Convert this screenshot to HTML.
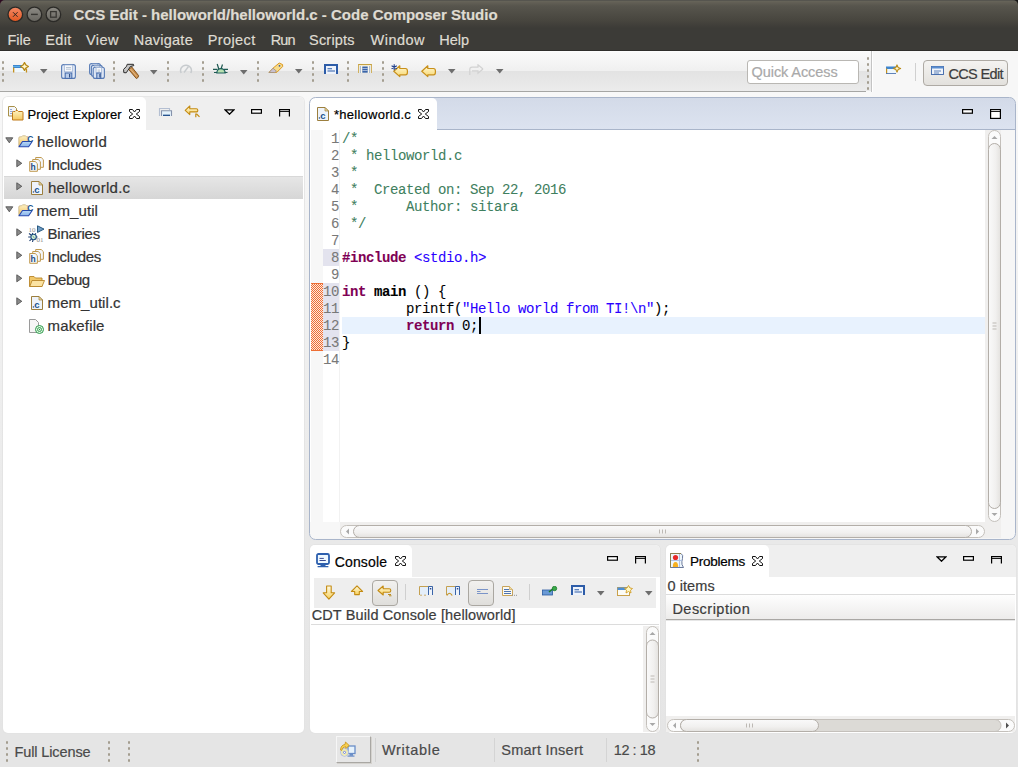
<!DOCTYPE html>
<html><head><meta charset="utf-8"><style>
html,body{margin:0;padding:0;}
body{width:1018px;height:767px;position:relative;overflow:hidden;background:linear-gradient(#f8f8f8 0px,#f8f8f8 92px,#e9e9e9 540px,#e5e5e5 733px,#e5e5e5 767px);font-family:"Liberation Sans",sans-serif;}
body>div{position:absolute;box-sizing:border-box;}
.t{line-height:20px;white-space:pre;-webkit-text-stroke:0.2px currentColor;}
</style></head><body>
<div style="left:0px;top:0px;width:1018px;height:51px;background:linear-gradient(#56554f 0px,#56554f 1px,#67655a 1px,#625f55 2.5px,#57554d 6px,#48463f 20px,#3c3b37 28px,#3c3b37 49.5px,#302f2c 50px,#2f2e2b 51px);border-radius:5px 5px 0 0;"></div>
<div style="left:0px;top:0px;width:6px;height:6px;background:#2c0b20;z-index:-1"></div>
<div style="left:1012px;top:0px;width:6px;height:6px;background:#151515;z-index:-1"></div>
<svg style="position:absolute;left:6px;top:5px" width="58" height="19" viewBox="0 0 58 19">
<defs>
<linearGradient id="gclose" x1="0" y1="0" x2="0" y2="1"><stop offset="0" stop-color="#f58a66"/><stop offset="1" stop-color="#e2561f"/></linearGradient>
<linearGradient id="ggray" x1="0" y1="0" x2="0" y2="1"><stop offset="0" stop-color="#8d8b85"/><stop offset="1" stop-color="#67655f"/></linearGradient>
</defs>
<circle cx="9.3" cy="9.4" r="7.3" fill="url(#gclose)" stroke="#2b2a27" stroke-width="1.3"/>
<path d="M7 7.2 L11.6 11.8 M11.6 7.2 L7 11.8" stroke="#2e2620" stroke-width="1"/>
<circle cx="28.4" cy="9.4" r="7.3" fill="url(#ggray)" stroke="#2b2a27" stroke-width="1.3"/>
<path d="M25 9.4 H31.8" stroke="#383733" stroke-width="1.4"/>
<circle cx="47.4" cy="9.4" r="7.3" fill="url(#ggray)" stroke="#2b2a27" stroke-width="1.3"/>
<rect x="44.6" y="6.6" width="5.6" height="5.6" fill="none" stroke="#383733" stroke-width="1.3"/>
</svg>
<div class="t" style="left:73.6px;top:5px;font-family:'Liberation Sans';font-size:15px;font-weight:bold;color:#dfdbd2;letter-spacing:-0.003px;">CCS Edit - helloworld/helloworld.c - Code Composer Studio</div>
<div class="t" style="left:7.5px;top:30px;font-family:'Liberation Sans';font-size:14.5px;font-weight:normal;color:#dfdbd2;letter-spacing:-0.044px;">File</div>
<div class="t" style="left:45.3px;top:30px;font-family:'Liberation Sans';font-size:14.5px;font-weight:normal;color:#dfdbd2;letter-spacing:0.300px;">Edit</div>
<div class="t" style="left:86px;top:30px;font-family:'Liberation Sans';font-size:14.5px;font-weight:normal;color:#dfdbd2;letter-spacing:0.457px;">View</div>
<div class="t" style="left:133.7px;top:30px;font-family:'Liberation Sans';font-size:14.5px;font-weight:normal;color:#dfdbd2;letter-spacing:0.258px;">Navigate</div>
<div class="t" style="left:207.7px;top:30px;font-family:'Liberation Sans';font-size:14.5px;font-weight:normal;color:#dfdbd2;letter-spacing:0.408px;">Project</div>
<div class="t" style="left:270.7px;top:30px;font-family:'Liberation Sans';font-size:14.5px;font-weight:normal;color:#dfdbd2;letter-spacing:-0.803px;">Run</div>
<div class="t" style="left:309px;top:30px;font-family:'Liberation Sans';font-size:14.5px;font-weight:normal;color:#dfdbd2;letter-spacing:0.210px;">Scripts</div>
<div class="t" style="left:370.5px;top:30px;font-family:'Liberation Sans';font-size:14.5px;font-weight:normal;color:#dfdbd2;letter-spacing:0.487px;">Window</div>
<div class="t" style="left:439.3px;top:30px;font-family:'Liberation Sans';font-size:14.5px;font-weight:normal;color:#dfdbd2;letter-spacing:-0.032px;">Help</div>
<div style="left:0px;top:51px;width:872px;height:40px;background:linear-gradient(#ffffff 0px,#fafafa 1px,#f0f0f0 19.5px,#e3e3e3 20.5px,#ebebeb 39px,#ececec 40px);"></div>
<div style="left:0px;top:91px;width:866px;height:1px;background:#a6a6a4;"></div>
<div style="left:872px;top:51px;width:146px;height:46px;background:#f7f7f7;"></div>
<div style="left:871px;top:51px;width:1px;height:41px;background:#c4c4c4;"></div>
<div style="left:872px;top:51px;width:1px;height:41px;background:#fff;"></div>
<div style="left:1.5px;top:61px;width:2px;height:3px;background:#a39d8f;border-radius:1px;"></div>
<div style="left:1.5px;top:67px;width:2px;height:3px;background:#a39d8f;border-radius:1px;"></div>
<div style="left:1.5px;top:73px;width:2px;height:3px;background:#a39d8f;border-radius:1px;"></div>
<div style="left:1.5px;top:79px;width:2px;height:3px;background:#a39d8f;border-radius:1px;"></div>
<div style="left:112.5px;top:61px;width:2px;height:3px;background:#a39d8f;border-radius:1px;"></div>
<div style="left:112.5px;top:67px;width:2px;height:3px;background:#a39d8f;border-radius:1px;"></div>
<div style="left:112.5px;top:73px;width:2px;height:3px;background:#a39d8f;border-radius:1px;"></div>
<div style="left:112.5px;top:79px;width:2px;height:3px;background:#a39d8f;border-radius:1px;"></div>
<div style="left:166.5px;top:61px;width:2px;height:3px;background:#a39d8f;border-radius:1px;"></div>
<div style="left:166.5px;top:67px;width:2px;height:3px;background:#a39d8f;border-radius:1px;"></div>
<div style="left:166.5px;top:73px;width:2px;height:3px;background:#a39d8f;border-radius:1px;"></div>
<div style="left:166.5px;top:79px;width:2px;height:3px;background:#a39d8f;border-radius:1px;"></div>
<div style="left:201.5px;top:61px;width:2px;height:3px;background:#a39d8f;border-radius:1px;"></div>
<div style="left:201.5px;top:67px;width:2px;height:3px;background:#a39d8f;border-radius:1px;"></div>
<div style="left:201.5px;top:73px;width:2px;height:3px;background:#a39d8f;border-radius:1px;"></div>
<div style="left:201.5px;top:79px;width:2px;height:3px;background:#a39d8f;border-radius:1px;"></div>
<div style="left:256.5px;top:61px;width:2px;height:3px;background:#a39d8f;border-radius:1px;"></div>
<div style="left:256.5px;top:67px;width:2px;height:3px;background:#a39d8f;border-radius:1px;"></div>
<div style="left:256.5px;top:73px;width:2px;height:3px;background:#a39d8f;border-radius:1px;"></div>
<div style="left:256.5px;top:79px;width:2px;height:3px;background:#a39d8f;border-radius:1px;"></div>
<div style="left:311.5px;top:61px;width:2px;height:3px;background:#a39d8f;border-radius:1px;"></div>
<div style="left:311.5px;top:67px;width:2px;height:3px;background:#a39d8f;border-radius:1px;"></div>
<div style="left:311.5px;top:73px;width:2px;height:3px;background:#a39d8f;border-radius:1px;"></div>
<div style="left:311.5px;top:79px;width:2px;height:3px;background:#a39d8f;border-radius:1px;"></div>
<div style="left:346.5px;top:61px;width:2px;height:3px;background:#a39d8f;border-radius:1px;"></div>
<div style="left:346.5px;top:67px;width:2px;height:3px;background:#a39d8f;border-radius:1px;"></div>
<div style="left:346.5px;top:73px;width:2px;height:3px;background:#a39d8f;border-radius:1px;"></div>
<div style="left:346.5px;top:79px;width:2px;height:3px;background:#a39d8f;border-radius:1px;"></div>
<div style="left:381.5px;top:61px;width:2px;height:3px;background:#a39d8f;border-radius:1px;"></div>
<div style="left:381.5px;top:67px;width:2px;height:3px;background:#a39d8f;border-radius:1px;"></div>
<div style="left:381.5px;top:73px;width:2px;height:3px;background:#a39d8f;border-radius:1px;"></div>
<div style="left:381.5px;top:79px;width:2px;height:3px;background:#a39d8f;border-radius:1px;"></div>
<div style="left:866.5px;top:57px;width:2px;height:3px;background:#a39d8f;border-radius:1px;"></div>
<div style="left:866.5px;top:63px;width:2px;height:3px;background:#a39d8f;border-radius:1px;"></div>
<div style="left:866.5px;top:69px;width:2px;height:3px;background:#a39d8f;border-radius:1px;"></div>
<div style="left:866.5px;top:75px;width:2px;height:3px;background:#a39d8f;border-radius:1px;"></div>
<div style="left:866.5px;top:81px;width:2px;height:3px;background:#a39d8f;border-radius:1px;"></div>
<div style="left:866.5px;top:87px;width:2px;height:3px;background:#a39d8f;border-radius:1px;"></div>
<svg style="position:absolute;left:12px;top:62px" width="17" height="12" viewBox="0 0 17 12"><defs><linearGradient id="nwb" x1="0" y1="0" x2="0" y2="1"><stop offset="0" stop-color="#2f6fc0"/><stop offset="0.5" stop-color="#5ab0ea"/><stop offset="1" stop-color="#2f6fc0"/></linearGradient></defs><rect x="1" y="3" width="14" height="7" fill="#eef7fd"/><rect x="1" y="3" width="12" height="3" fill="url(#nwb)"/><rect x="1" y="5.5" width="1.3" height="5" fill="#c4901e"/><rect x="13.8" y="6.5" width="1.3" height="4" fill="#c4901e"/><path d="M12.5 0.6000000000000001 L13.95 3.05 L16.4 4.5 L13.95 5.95 L12.5 8.4 L11.05 5.95 L8.6 4.5 L11.05 3.05 Z" fill="#fff6d0" stroke="#b88a16" stroke-width="1.3" stroke-linejoin="round"/></svg>
<svg style="position:absolute;left:40px;top:69px" width="8" height="5" viewBox="0 0 8 5"><path d="M0 0H7.5L3.75 4.6Z" fill="#6d6d6d"/></svg>
<svg style="position:absolute;left:61px;top:64px" width="15" height="15" viewBox="0 0 15 15"><rect x="0.6" y="0.6" width="13.8" height="13.8" rx="2" fill="#dde6f4" stroke="#5a7db6" stroke-width="1.1"/><rect x="3.5" y="1" width="8" height="6.75" fill="#f6f8fb" stroke="#9fb3d3" stroke-width="0.7"/><path d="M5 3.5 H10 M5 5.2 H10" stroke="#a8b8cc" stroke-width="0.8"/><rect x="4.2" y="9" width="6.6" height="5.4" fill="#b9cdea" stroke="#4a6fae" stroke-width="1.1"/><rect x="8.0" y="10" width="1.2" height="3.5" fill="#35528a"/></svg>
<svg style="position:absolute;left:89px;top:63px" width="17" height="17" viewBox="0 0 17 17"><rect x="0.6" y="0.6" width="10.8" height="10.8" rx="2" fill="#dde6f4" stroke="#5a7db6" stroke-width="1.1"/><rect x="3.5" y="1" width="5" height="5.4" fill="#f6f8fb" stroke="#9fb3d3" stroke-width="0.7"/><rect x="4.2" y="6" width="3.5999999999999996" height="5.4" fill="#b9cdea" stroke="#4a6fae" stroke-width="1.1"/><rect x="6.5" y="7" width="1.2" height="3.5" fill="#35528a"/><rect x="2.4" y="2.4" width="10.8" height="10.8" rx="2" fill="#dde6f4" stroke="#5a7db6" stroke-width="1.1"/><rect x="5.3" y="2.8" width="5" height="5.4" fill="#f6f8fb" stroke="#9fb3d3" stroke-width="0.7"/><rect x="6.0" y="7.800000000000001" width="3.5999999999999996" height="5.4" fill="#b9cdea" stroke="#4a6fae" stroke-width="1.1"/><rect x="8.3" y="8.8" width="1.2" height="3.5" fill="#35528a"/><rect x="4.2" y="4.2" width="11.200000000000001" height="11.200000000000001" rx="2" fill="#dde6f4" stroke="#5a7db6" stroke-width="1.1"/><rect x="7.1" y="4.6" width="5.4" height="5.58" fill="#f6f8fb" stroke="#9fb3d3" stroke-width="0.7"/><path d="M8.6 7.1 H11.0 M8.6 8.8 H11.0" stroke="#a8b8cc" stroke-width="0.8"/><rect x="7.800000000000001" y="10.0" width="4.0" height="5.4" fill="#b9cdea" stroke="#4a6fae" stroke-width="1.1"/><rect x="10.3" y="11.0" width="1.2" height="3.5" fill="#35528a"/></svg>
<svg style="position:absolute;left:118px;top:60px" width="24" height="22" viewBox="0 0 24 22"><defs><linearGradient id="hh" x1="0" y1="0" x2="1" y2="0"><stop offset="0" stop-color="#9a6428"/><stop offset="0.5" stop-color="#e0aa6a"/><stop offset="1" stop-color="#a86a2a"/></linearGradient></defs><path d="M10.6 9.4 L13.8 7 L20.6 15.6 Q20.8 17.6 18.4 18.6 Z" fill="#c9904e" stroke="#7a4814" stroke-width="0.9" stroke-linejoin="round"/><path d="M12.5 9 L18.8 16.5" stroke="#e8c090" stroke-width="0.9"/><path d="M5.8 12.6 L5.6 9.4 L8.6 6.2 L9.2 4.3 H15.4 L15.8 5.6 L12.3 6.6 L10.8 9 L8.2 12.8 Z" fill="#c6c6c6" stroke="#2a2a2a" stroke-width="1" stroke-linejoin="round"/></svg>
<svg style="position:absolute;left:150px;top:70px" width="8" height="5" viewBox="0 0 8 5"><path d="M0 0H7.5L3.75 4.6Z" fill="#6d6d6d"/></svg>
<svg style="position:absolute;left:179px;top:63px" width="14" height="11" viewBox="0 0 14 11"><path d="M2.2 10 A5.4 5.4 0 1 1 11.8 10" fill="none" stroke="#c7cbce" stroke-width="1.5"/><path d="M5 9.5 L9.5 3.5" stroke="#c7cbce" stroke-width="1.4"/></svg>
<svg style="position:absolute;left:212px;top:63px" width="17" height="11" viewBox="0 0 17 11"><path d="M4.8 10 A4.2 4.4 0 0 1 13.2 10 Z" fill="#b8e0b0" stroke="#1f6060" stroke-width="1.2"/><path d="M1 6.3 H5.5 M2 9.5 H5 M12 6.3 H16 M12.5 9.5 H15.5 M5.2 1 L6.8 6 M10.5 1.5 L9 6" stroke="#1f5a52" stroke-width="1.2"/></svg>
<svg style="position:absolute;left:240px;top:70px" width="8" height="5" viewBox="0 0 8 5"><path d="M0 0H7.5L3.75 4.6Z" fill="#6d6d6d"/></svg>
<svg style="position:absolute;left:268px;top:62px" width="17" height="12" viewBox="0 0 17 12"><path d="M1 10.5 L5 6.2 L11.2 1 L14.6 2.6 L14.6 4.6 L9 10.2 L6.8 10.5 Z" fill="#f8dc8a" stroke="#dc9820" stroke-width="1" stroke-linejoin="round"/><path d="M1 10.5 L5 6.2 L8.5 9.2 L6.8 10.5 Z" fill="#c8c0d0" stroke="#a09080" stroke-width="0.8"/><circle cx="11.5" cy="3.8" r="0.9" fill="#3a5aa0"/></svg>
<svg style="position:absolute;left:295px;top:69px" width="8" height="5" viewBox="0 0 8 5"><path d="M0 0H7.5L3.75 4.6Z" fill="#6d6d6d"/></svg>
<svg style="position:absolute;left:324px;top:64px" width="14" height="10" viewBox="0 0 14 10"><rect x="1" y="1" width="12" height="9" fill="#eef3fb"/><path d="M1 10 V1 H13 V10" fill="none" stroke="#2d5ca8" stroke-width="2"/><path d="M3.5 4.8 H8 M3.5 7 H11" stroke="#2d5ca8" stroke-width="1.1"/></svg>
<svg style="position:absolute;left:358px;top:64px" width="14" height="9" viewBox="0 0 14 9"><rect x="0.5" y="0.5" width="13" height="9" fill="#fbf8ec" stroke="#d0b060"/><path d="M0.5 0.5 H13.5" stroke="#c4a040" stroke-width="1.3"/><path d="M2.3 2.5 V9 M11.7 2.5 V9" stroke="#3a64a8" stroke-width="1" stroke-dasharray="1 1"/><rect x="4.3" y="2.5" width="5.4" height="6.2" fill="#3a64a8"/><path d="M4.3 4.5 H9.7 M4.3 6.5 H9.7" stroke="#cdd8ec" stroke-width="0.7"/></svg>
<svg style="position:absolute;left:393px;top:64.5px" width="16" height="13" viewBox="0 0 16 13"><defs><linearGradient id="la393" x1="0" y1="0" x2="0" y2="1"><stop offset="0" stop-color="#fff8d8"/><stop offset="1" stop-color="#f8d870"/></linearGradient></defs><path d="M0.8 6.2 L6.8 0.8 V3.5 H12.5 Q14.4 3.5 14.4 5.8 V7.2 Q14.4 9.8 12.5 9.8 H6.8 V11.6 Z" fill="url(#la393)" stroke="#c8901a" stroke-width="1.2" stroke-linejoin="round"/></svg>
<svg style="position:absolute;left:391px;top:64px" width="7" height="7" viewBox="0 0 7 7"><path d="M3.2 0.3 V6.3 M0.6 1.8 L5.8 4.8 M5.8 1.8 L0.6 4.8" stroke="#1f3f8a" stroke-width="1.1"/></svg>
<svg style="position:absolute;left:420.5px;top:64.5px" width="16" height="13" viewBox="0 0 16 13"><defs><linearGradient id="la420.5" x1="0" y1="0" x2="0" y2="1"><stop offset="0" stop-color="#fff8d8"/><stop offset="1" stop-color="#f8d870"/></linearGradient></defs><path d="M0.8 6.2 L6.8 0.8 V3.5 H12.5 Q14.4 3.5 14.4 5.8 V7.2 Q14.4 9.8 12.5 9.8 H6.8 V11.6 Z" fill="url(#la420.5)" stroke="#c8901a" stroke-width="1.2" stroke-linejoin="round"/></svg>
<svg style="position:absolute;left:448px;top:69px" width="8" height="5" viewBox="0 0 8 5"><path d="M0 0H7.5L3.75 4.6Z" fill="#6d6d6d"/></svg>
<svg style="position:absolute;left:469px;top:64px" width="15" height="13" viewBox="0 0 15 13"><path d="M14 5 L9 0.8 V3.2 H3 Q0.8 3.2 0.8 5.5 V11" fill="none" stroke="#d2d2d2" stroke-width="1.2"/><path d="M14 5 L9 9.2 V6.8 H3" fill="none" stroke="#d2d2d2" stroke-width="1.2"/></svg>
<svg style="position:absolute;left:496px;top:69px" width="8" height="5" viewBox="0 0 8 5"><path d="M0 0H7.5L3.75 4.6Z" fill="#6d6d6d"/></svg>
<div style="left:2px;top:96px;width:303px;height:638px;background:#e2e2e2;border-radius:6px;opacity:0.8;"></div>
<div style="left:3px;top:97px;width:301px;height:636px;background:#fff;border-radius:5px;"></div>
<div style="left:3px;top:97px;width:301px;height:33px;background:#efefef;border-radius:5px 5px 0 0;"></div>
<div style="left:3px;top:97px;width:143px;height:33px;background:#fff;border-radius:5px 5px 0 0;"></div>
<svg style="position:absolute;left:7px;top:105px" width="17" height="16" viewBox="0 0 17 16"><defs><linearGradient id="tfy" x1="0" y1="0" x2="0" y2="1"><stop offset="0" stop-color="#fff4c0"/><stop offset="1" stop-color="#f4c860"/></linearGradient></defs><path d="M1.5 1.5 H7.5 L9.5 3.5 V11 H1.5 Z" fill="#f4f6fa" stroke="#a89048" stroke-width="1"/><path d="M3 4.5 H5 M3 6.5 H6 M3 8.5 H5" stroke="#8aa0d0" stroke-width="0.9"/><path d="M5.5 15 V7.5 Q5.5 6.5 6.5 6.5 H8 L9 5.5 H10.5 L11.5 6.5 H15 Q16 6.5 16 7.5 V15 Z" fill="url(#tfy)" stroke="#c07a1a" stroke-width="1"/></svg>
<div class="t" style="left:27.5px;top:105px;font-family:'Liberation Sans';font-size:13px;font-weight:normal;color:#000;letter-spacing:0.113px;">Project Explorer</div>
<svg style="position:absolute;left:129px;top:109px" width="11" height="10" viewBox="0 0 11 10"><path d="M0.5 0.5 H3.5 L5.5 3 L7.5 0.5 H10.5 V2.5 L7.3 5 L10.5 7.5 V9.5 H7.5 L5.5 7 L3.5 9.5 H0.5 V7.5 L3.7 5 L0.5 2.5 Z" fill="#fff" stroke="#111" stroke-width="1"/></svg>
<svg style="position:absolute;left:158px;top:107px" width="15" height="10" viewBox="0 0 15 10"><path d="M1.5 9 V1.5 H11.5 V3" fill="none" stroke="#b4bfd2" stroke-width="1.1"/><rect x="3.5" y="3.8" width="10" height="5.2" fill="#e4f2fb"/><path d="M3.5 9 V3.8 H13.5 V9" fill="none" stroke="#8592ab" stroke-width="1.1"/><path d="M5 8.3 H12" stroke="#1b4a8a" stroke-width="1.3"/></svg>
<svg style="position:absolute;left:184px;top:105px" width="17" height="13" viewBox="0 0 17 13"><defs><linearGradient id="lnk" x1="0" y1="0" x2="0" y2="1"><stop offset="0" stop-color="#fffbe6"/><stop offset="1" stop-color="#f7d15c"/></linearGradient></defs><path d="M1.2 5.3 L5.8 1 V3.7 H12.3 Q13.8 3.7 13.8 5.3 Q13.8 6.9 12.3 6.9 H5.8 V9.6 Z" fill="url(#lnk)" stroke="#c48c14" stroke-width="1.1" stroke-linejoin="round"/><path d="M11.8 12.2 V9 H12.8 L15.5 11.8" fill="none" stroke="#c48c14" stroke-width="1.2"/></svg>
<svg style="position:absolute;left:224px;top:109px" width="11" height="6" viewBox="0 0 11 6"><path d="M1 0.8 H10 L5.5 5.2 Z" fill="none" stroke="#000" stroke-width="1.3" stroke-linejoin="miter"/></svg>
<svg style="position:absolute;left:251px;top:109px" width="11" height="5" viewBox="0 0 11 5"><rect x="0.6" y="0.6" width="9.8" height="3.6" fill="#fff" stroke="#000" stroke-width="1.2"/></svg>
<svg style="position:absolute;left:278.5px;top:109px" width="11" height="8" viewBox="0 0 11 8"><path d="M0.6 7.5 V0.6 H10.4 V7.5" fill="none" stroke="#000" stroke-width="1.2"/><path d="M1 2.5 H10" stroke="#000" stroke-width="0.9"/></svg>
<div style="left:4px;top:176px;width:299px;height:23px;background:linear-gradient(#e6e6e6,#d6d6d6);border-top:1px solid #d8d8d8;"></div>
<svg style="position:absolute;left:4.5px;top:136.5px" width="9" height="7" viewBox="0 0 9 7"><path d="M0.8 0.8 H7.8 L4.3 5.8 Z" fill="#8a8a8a" stroke="#555" stroke-width="0.9" stroke-linejoin="round"/></svg>
<svg style="position:absolute;left:18px;top:135px" width="16" height="13" viewBox="0 0 16 13"><defs><linearGradient id="pfy" x1="0" y1="0" x2="0" y2="1"><stop offset="0" stop-color="#fdf0c0"/><stop offset="1" stop-color="#f0c060"/></linearGradient><linearGradient id="pfb" x1="0" y1="0" x2="0" y2="1"><stop offset="0" stop-color="#b8d8f8"/><stop offset="1" stop-color="#88b4e8"/></linearGradient></defs><path d="M0.8 11.5 V3 Q0.8 1.8 2 1.8 H3.5 L4.5 0.8 H7.5 L8.5 1.8 H10 V6 Z" fill="url(#pfy)" stroke="#c8b488" stroke-width="0.8"/><path d="M1 11.8 L4.5 6.5 H14.2 L10.6 11.8 Z" fill="url(#pfb)" stroke="#2848b0" stroke-width="1.1" stroke-linejoin="round"/><text x="9.2" y="6.8" font-family="Liberation Sans" font-weight="bold" font-size="8.5" fill="#1c5490">C</text></svg>
<div class="t" style="left:37px;top:132px;font-family:'Liberation Sans';font-size:15px;font-weight:normal;color:#333333;letter-spacing:0.245px;">helloworld</div>
<svg style="position:absolute;left:15.5px;top:159px" width="7" height="9" viewBox="0 0 7 9"><path d="M0.8 0.8 V7.8 L5.8 4.3 Z" fill="#8a8a8a" stroke="#555" stroke-width="0.9" stroke-linejoin="round"/></svg>
<svg style="position:absolute;left:29px;top:157px" width="16" height="16" viewBox="0 0 16 16"><path d="M6.7 0.5 H12.2 L14.399999999999999 2.7 V10.3 H6.7 Z" fill="#f4f7fb" stroke="#c09a50" stroke-width="1"/><path d="M3.7 2.5 H9.2 L11.399999999999999 4.7 V12.3 H3.7 Z" fill="#f4f7fb" stroke="#c09a50" stroke-width="1"/><path d="M0.7 4.5 H6.2 L8.399999999999999 6.7 V14.3 H0.7 Z" fill="#f4f7fb" stroke="#c09a50" stroke-width="1"/><text x="1.6" y="13.4" font-family="Liberation Sans" font-weight="bold" font-size="8.5" fill="#1c4a84">h</text></svg>
<div class="t" style="left:47.7px;top:155px;font-family:'Liberation Sans';font-size:15px;font-weight:normal;color:#333333;letter-spacing:-0.259px;">Includes</div>
<svg style="position:absolute;left:15.5px;top:182px" width="7" height="9" viewBox="0 0 7 9"><path d="M0.8 0.8 V7.8 L5.8 4.3 Z" fill="#8a8a8a" stroke="#555" stroke-width="0.9" stroke-linejoin="round"/></svg>
<svg style="position:absolute;left:31px;top:181px" width="12" height="14" viewBox="0 0 12 14"><path d="M0.5 0.5 H8 L11.5 4 V13.5 H0.5 Z" fill="#eef3fa" stroke="#9c7f3e"/><path d="M8 0.5 V4 H11.5 Z" fill="#f0dca0" stroke="#9c7f3e" stroke-width="0.7"/><text x="3.2" y="11.6" font-family="Liberation Sans" font-weight="bold" font-size="9.5" fill="#22518f">c</text><rect x="1.8" y="10.3" width="1.3" height="1.3" fill="#22518f"/></svg>
<div class="t" style="left:47.9px;top:178px;font-family:'Liberation Sans';font-size:15px;font-weight:normal;color:#333333;letter-spacing:0.273px;">helloworld.c</div>
<svg style="position:absolute;left:4.5px;top:205.5px" width="9" height="7" viewBox="0 0 9 7"><path d="M0.8 0.8 H7.8 L4.3 5.8 Z" fill="#8a8a8a" stroke="#555" stroke-width="0.9" stroke-linejoin="round"/></svg>
<svg style="position:absolute;left:18px;top:204px" width="16" height="13" viewBox="0 0 16 13"><defs><linearGradient id="pfy" x1="0" y1="0" x2="0" y2="1"><stop offset="0" stop-color="#fdf0c0"/><stop offset="1" stop-color="#f0c060"/></linearGradient><linearGradient id="pfb" x1="0" y1="0" x2="0" y2="1"><stop offset="0" stop-color="#b8d8f8"/><stop offset="1" stop-color="#88b4e8"/></linearGradient></defs><path d="M0.8 11.5 V3 Q0.8 1.8 2 1.8 H3.5 L4.5 0.8 H7.5 L8.5 1.8 H10 V6 Z" fill="url(#pfy)" stroke="#c8b488" stroke-width="0.8"/><path d="M1 11.8 L4.5 6.5 H14.2 L10.6 11.8 Z" fill="url(#pfb)" stroke="#2848b0" stroke-width="1.1" stroke-linejoin="round"/><text x="9.2" y="6.8" font-family="Liberation Sans" font-weight="bold" font-size="8.5" fill="#1c5490">C</text></svg>
<div class="t" style="left:36.5px;top:201px;font-family:'Liberation Sans';font-size:15px;font-weight:normal;color:#333333;letter-spacing:0.080px;">mem_util</div>
<svg style="position:absolute;left:15.5px;top:228px" width="7" height="9" viewBox="0 0 7 9"><path d="M0.8 0.8 V7.8 L5.8 4.3 Z" fill="#8a8a8a" stroke="#555" stroke-width="0.9" stroke-linejoin="round"/></svg>
<svg style="position:absolute;left:27px;top:225px" width="18" height="18" viewBox="0 0 18 18"><text x="1.6" y="6.6" font-family="Liberation Serif" font-size="7" fill="#8a8a8a">10</text><text x="9.6" y="16.8" font-family="Liberation Serif" font-size="7" fill="#8a8a8a">01</text><path d="M10.5 0.8 V7.4 L17 4.1 Z" fill="#6f9cc4" stroke="#2a5a82" stroke-width="1"/><path d="M2 8.5 L4.5 10.3 M1.2 12 H3.8 M2.5 15.8 L4.6 13.8 M5.5 17 L6 14.8 M5.3 8 L6 9.6 M8.8 8.3 L8 9.8 M9 12 H10.5" stroke="#1f3f70" stroke-width="1.1"/><circle cx="6.6" cy="12" r="2.7" fill="#d8efe0" stroke="#1f4f80" stroke-width="1.1"/><path d="M5.5 11 L7.6 13" stroke="#3a8a5a" stroke-width="0.8"/></svg>
<div class="t" style="left:47.6px;top:224px;font-family:'Liberation Sans';font-size:15px;font-weight:normal;color:#333333;letter-spacing:-0.225px;">Binaries</div>
<svg style="position:absolute;left:15.5px;top:251px" width="7" height="9" viewBox="0 0 7 9"><path d="M0.8 0.8 V7.8 L5.8 4.3 Z" fill="#8a8a8a" stroke="#555" stroke-width="0.9" stroke-linejoin="round"/></svg>
<svg style="position:absolute;left:29px;top:249px" width="16" height="16" viewBox="0 0 16 16"><path d="M6.7 0.5 H12.2 L14.399999999999999 2.7 V10.3 H6.7 Z" fill="#f4f7fb" stroke="#c09a50" stroke-width="1"/><path d="M3.7 2.5 H9.2 L11.399999999999999 4.7 V12.3 H3.7 Z" fill="#f4f7fb" stroke="#c09a50" stroke-width="1"/><path d="M0.7 4.5 H6.2 L8.399999999999999 6.7 V14.3 H0.7 Z" fill="#f4f7fb" stroke="#c09a50" stroke-width="1"/><text x="1.6" y="13.4" font-family="Liberation Sans" font-weight="bold" font-size="8.5" fill="#1c4a84">h</text></svg>
<div class="t" style="left:47.6px;top:247px;font-family:'Liberation Sans';font-size:15px;font-weight:normal;color:#333333;letter-spacing:-0.309px;">Includes</div>
<svg style="position:absolute;left:15.5px;top:274px" width="7" height="9" viewBox="0 0 7 9"><path d="M0.8 0.8 V7.8 L5.8 4.3 Z" fill="#8a8a8a" stroke="#555" stroke-width="0.9" stroke-linejoin="round"/></svg>
<svg style="position:absolute;left:29px;top:275px" width="16" height="12" viewBox="0 0 16 12"><path d="M0.5 1.5 H5 L6.5 3 H13 V11.5 H0.5 Z" fill="#f1c86a" stroke="#b8862a" stroke-width="0.9"/><path d="M0.8 11.5 L3 5.5 H15.5 L13 11.5 Z" fill="#fbe3a3" stroke="#b8862a" stroke-width="0.9"/></svg>
<div class="t" style="left:47.6px;top:270px;font-family:'Liberation Sans';font-size:15px;font-weight:normal;color:#333333;letter-spacing:-0.401px;">Debug</div>
<svg style="position:absolute;left:15.5px;top:297px" width="7" height="9" viewBox="0 0 7 9"><path d="M0.8 0.8 V7.8 L5.8 4.3 Z" fill="#8a8a8a" stroke="#555" stroke-width="0.9" stroke-linejoin="round"/></svg>
<svg style="position:absolute;left:31px;top:296px" width="12" height="14" viewBox="0 0 12 14"><path d="M0.5 0.5 H8 L11.5 4 V13.5 H0.5 Z" fill="#eef3fa" stroke="#9c7f3e"/><path d="M8 0.5 V4 H11.5 Z" fill="#f0dca0" stroke="#9c7f3e" stroke-width="0.7"/><text x="3.2" y="11.6" font-family="Liberation Sans" font-weight="bold" font-size="9.5" fill="#22518f">c</text><rect x="1.8" y="10.3" width="1.3" height="1.3" fill="#22518f"/></svg>
<div class="t" style="left:47.6px;top:293px;font-family:'Liberation Sans';font-size:15px;font-weight:normal;color:#333333;letter-spacing:0.057px;">mem_util.c</div>
<svg style="position:absolute;left:29px;top:319px" width="16" height="15" viewBox="0 0 16 15"><path d="M0.5 0.5 H6.5 L9.5 3.5 V13.5 H0.5 Z" fill="#f6f6f6" stroke="#9a9a9a"/><circle cx="10.5" cy="10.5" r="4" fill="#e6f6e6" stroke="#2a9a4a" stroke-width="1"/><circle cx="10.5" cy="10.5" r="2" fill="none" stroke="#2a9a4a" stroke-width="0.9"/><circle cx="10.5" cy="10.5" r="0.7" fill="#2a9a4a"/></svg>
<div class="t" style="left:47.6px;top:316px;font-family:'Liberation Sans';font-size:15px;font-weight:normal;color:#333333;letter-spacing:0.143px;">makefile</div>
<div style="left:309px;top:97px;width:707px;height:443px;background:#f6f6f6;border-radius:6px;"></div>
<div style="left:310px;top:98px;width:705px;height:32px;background:linear-gradient(#d3dae8,#dce3f0);border-radius:5px 5px 0 0;border-bottom:1px solid #a9b5ca;"></div>
<div style="left:310px;top:98px;width:127px;height:32px;background:#fff;border-radius:5px 5px 0 0;"></div>
<svg style="position:absolute;left:317px;top:107px" width="12" height="14" viewBox="0 0 12 14"><path d="M0.5 0.5 H8 L11.5 4 V13.5 H0.5 Z" fill="#eef3fa" stroke="#9c7f3e"/><path d="M8 0.5 V4 H11.5 Z" fill="#f0dca0" stroke="#9c7f3e" stroke-width="0.7"/><text x="3.2" y="11.6" font-family="Liberation Sans" font-weight="bold" font-size="9.5" fill="#22518f">c</text><rect x="1.8" y="10.3" width="1.3" height="1.3" fill="#22518f"/></svg>
<div class="t" style="left:334px;top:105px;font-family:'Liberation Sans';font-size:13px;font-weight:normal;color:#000;letter-spacing:0.254px;">*helloworld.c</div>
<svg style="position:absolute;left:418px;top:109px" width="11" height="10" viewBox="0 0 11 10"><path d="M0.5 0.5 H3.5 L5.5 3 L7.5 0.5 H10.5 V2.5 L7.3 5 L10.5 7.5 V9.5 H7.5 L5.5 7 L3.5 9.5 H0.5 V7.5 L3.7 5 L0.5 2.5 Z" fill="#fff" stroke="#111" stroke-width="1"/></svg>
<svg style="position:absolute;left:962px;top:109px" width="11" height="5" viewBox="0 0 11 5"><rect x="0.6" y="0.6" width="9.8" height="3.6" fill="#fff" stroke="#000" stroke-width="1.2"/></svg>
<svg style="position:absolute;left:990px;top:109px" width="11" height="10" viewBox="0 0 11 10"><rect x="0.6" y="0.6" width="9.8" height="8.8" fill="#fff" stroke="#000" stroke-width="1.2"/><path d="M1 2.5 H10" stroke="#000" stroke-width="0.9"/></svg>
<div style="left:310px;top:130px;width:30px;height:408px;background:#f7f7f7;"></div>
<div style="left:310px;top:130px;width:1px;height:392px;background:#fff;"></div>
<div style="left:323px;top:130px;width:662px;height:392px;background:#fff;"></div>
<div style="left:339px;top:130px;width:1px;height:392px;background:#f2f2f2;"></div>
<div style="left:342px;top:317px;width:643px;height:17px;background:#e8f2fe;"></div>
<div style="left:323px;top:249px;width:16px;height:17px;background:#e3e3ee;"></div>
<div style="left:323px;top:283px;width:16px;height:68px;background:#e3e3ee;"></div>
<svg style="position:absolute;left:311px;top:283px" width="12" height="68" viewBox="0 0 12 68"><defs><pattern id="chk" width="2" height="2" patternUnits="userSpaceOnUse"><rect width="2" height="2" fill="#fde8dc"/><rect width="1" height="1" fill="#ee6e34"/><rect x="1" y="1" width="1" height="1" fill="#ee6e34"/></pattern></defs><rect x="0" y="0" width="12" height="68" fill="url(#chk)"/><path d="M0 0.5 H12 M0 67.5 H12" stroke="#ee6e34"/></svg>
<div class="t" style="left:331px;top:129px;font-family:'Liberation Mono';font-size:14px;font-weight:normal;color:#787878;letter-spacing:-0.4px;-webkit-text-stroke:0.08px currentColor;">1</div>
<div class="t" style="left:331px;top:146px;font-family:'Liberation Mono';font-size:14px;font-weight:normal;color:#787878;letter-spacing:-0.4px;-webkit-text-stroke:0.08px currentColor;">2</div>
<div class="t" style="left:331px;top:163px;font-family:'Liberation Mono';font-size:14px;font-weight:normal;color:#787878;letter-spacing:-0.4px;-webkit-text-stroke:0.08px currentColor;">3</div>
<div class="t" style="left:331px;top:180px;font-family:'Liberation Mono';font-size:14px;font-weight:normal;color:#787878;letter-spacing:-0.4px;-webkit-text-stroke:0.08px currentColor;">4</div>
<div class="t" style="left:331px;top:197px;font-family:'Liberation Mono';font-size:14px;font-weight:normal;color:#787878;letter-spacing:-0.4px;-webkit-text-stroke:0.08px currentColor;">5</div>
<div class="t" style="left:331px;top:214px;font-family:'Liberation Mono';font-size:14px;font-weight:normal;color:#787878;letter-spacing:-0.4px;-webkit-text-stroke:0.08px currentColor;">6</div>
<div class="t" style="left:331px;top:231px;font-family:'Liberation Mono';font-size:14px;font-weight:normal;color:#787878;letter-spacing:-0.4px;-webkit-text-stroke:0.08px currentColor;">7</div>
<div class="t" style="left:331px;top:248px;font-family:'Liberation Mono';font-size:14px;font-weight:normal;color:#787878;letter-spacing:-0.4px;-webkit-text-stroke:0.08px currentColor;">8</div>
<div class="t" style="left:331px;top:265px;font-family:'Liberation Mono';font-size:14px;font-weight:normal;color:#787878;letter-spacing:-0.4px;-webkit-text-stroke:0.08px currentColor;">9</div>
<div class="t" style="left:323px;top:282px;font-family:'Liberation Mono';font-size:14px;font-weight:normal;color:#787878;letter-spacing:-0.4px;-webkit-text-stroke:0.08px currentColor;">10</div>
<div class="t" style="left:323px;top:299px;font-family:'Liberation Mono';font-size:14px;font-weight:normal;color:#787878;letter-spacing:-0.4px;-webkit-text-stroke:0.08px currentColor;">11</div>
<div class="t" style="left:323px;top:316px;font-family:'Liberation Mono';font-size:14px;font-weight:normal;color:#787878;letter-spacing:-0.4px;-webkit-text-stroke:0.08px currentColor;">12</div>
<div class="t" style="left:323px;top:333px;font-family:'Liberation Mono';font-size:14px;font-weight:normal;color:#787878;letter-spacing:-0.4px;-webkit-text-stroke:0.08px currentColor;">13</div>
<div class="t" style="left:323px;top:350px;font-family:'Liberation Mono';font-size:14px;font-weight:normal;color:#787878;letter-spacing:-0.4px;-webkit-text-stroke:0.08px currentColor;">14</div>
<div class="t" style="left:342px;top:129px;font-family:'Liberation Mono';font-size:14px;font-weight:normal;color:#3f7f5f;letter-spacing:-0.4px;-webkit-text-stroke:0.08px currentColor;">/*</div>
<div class="t" style="left:350px;top:146px;font-family:'Liberation Mono';font-size:14px;font-weight:normal;color:#3f7f5f;letter-spacing:-0.4px;-webkit-text-stroke:0.08px currentColor;">* helloworld.c</div>
<div class="t" style="left:350px;top:163px;font-family:'Liberation Mono';font-size:14px;font-weight:normal;color:#3f7f5f;letter-spacing:-0.4px;-webkit-text-stroke:0.08px currentColor;">*</div>
<div class="t" style="left:350px;top:180px;font-family:'Liberation Mono';font-size:14px;font-weight:normal;color:#3f7f5f;letter-spacing:-0.4px;-webkit-text-stroke:0.08px currentColor;">*  Created on: Sep 22, 2016</div>
<div class="t" style="left:350px;top:197px;font-family:'Liberation Mono';font-size:14px;font-weight:normal;color:#3f7f5f;letter-spacing:-0.4px;-webkit-text-stroke:0.08px currentColor;">*      Author: sitara</div>
<div class="t" style="left:350px;top:214px;font-family:'Liberation Mono';font-size:14px;font-weight:normal;color:#3f7f5f;letter-spacing:-0.4px;-webkit-text-stroke:0.08px currentColor;">*/</div>
<div class="t" style="left:342px;top:248px;font-family:'Liberation Mono';font-size:14px;font-weight:bold;color:#7f0055;letter-spacing:-0.4px;-webkit-text-stroke:0.08px currentColor;">#include</div>
<div class="t" style="left:414px;top:248px;font-family:'Liberation Mono';font-size:14px;font-weight:normal;color:#2a00ff;letter-spacing:-0.4px;-webkit-text-stroke:0.08px currentColor;">&lt;stdio.h&gt;</div>
<div class="t" style="left:342px;top:282px;font-family:'Liberation Mono';font-size:14px;font-weight:bold;color:#7f0055;letter-spacing:-0.4px;-webkit-text-stroke:0.08px currentColor;">int</div>
<div class="t" style="left:374px;top:282px;font-family:'Liberation Mono';font-size:14px;font-weight:bold;color:#000;letter-spacing:-0.4px;-webkit-text-stroke:0.08px currentColor;">main</div>
<div class="t" style="left:414px;top:282px;font-family:'Liberation Mono';font-size:14px;font-weight:normal;color:#000;letter-spacing:-0.4px;-webkit-text-stroke:0.08px currentColor;">() {</div>
<div class="t" style="left:406px;top:299px;font-family:'Liberation Mono';font-size:14px;font-weight:normal;color:#000;letter-spacing:-0.4px;-webkit-text-stroke:0.08px currentColor;">printf(</div>
<div class="t" style="left:462px;top:299px;font-family:'Liberation Mono';font-size:14px;font-weight:normal;color:#2a00ff;letter-spacing:-0.4px;-webkit-text-stroke:0.08px currentColor;">"Hello world from TI!\n"</div>
<div class="t" style="left:654px;top:299px;font-family:'Liberation Mono';font-size:14px;font-weight:normal;color:#000;letter-spacing:-0.4px;-webkit-text-stroke:0.08px currentColor;">);</div>
<div class="t" style="left:406px;top:316px;font-family:'Liberation Mono';font-size:14px;font-weight:bold;color:#7f0055;letter-spacing:-0.4px;-webkit-text-stroke:0.08px currentColor;">return</div>
<div class="t" style="left:462px;top:316px;font-family:'Liberation Mono';font-size:14px;font-weight:normal;color:#000;letter-spacing:-0.4px;-webkit-text-stroke:0.08px currentColor;">0;</div>
<div class="t" style="left:342px;top:333px;font-family:'Liberation Mono';font-size:14px;font-weight:normal;color:#000;letter-spacing:-0.4px;-webkit-text-stroke:0.08px currentColor;">}</div>
<div style="left:479px;top:317px;width:2px;height:17px;background:#000;"></div>
<div style="left:985px;top:130px;width:16px;height:392px;background:#f0efee;"></div>
<div style="left:1001px;top:130px;width:14px;height:409px;background:#f6f6f6;"></div>
<div style="left:310px;top:522px;width:691px;height:16px;background:#f0efee;"></div>
<div style="left:310px;top:522px;width:30px;height:16px;background:#f7f7f7;"></div>
<svg style="position:absolute;left:988px;top:130px" width="13" height="392" viewBox="0 0 13 392"><rect x="0.5" y="0.5" width="12" height="391" rx="6" fill="#fbfbfb" stroke="#c4c0bb"/><path d="M3.5 9 L6.5 6 L9.5 9 Z" fill="#a8a8a8"/><path d="M3.5 383 L6.5 386 L9.5 383 Z" fill="#a8a8a8"/><defs><linearGradient id="vth130" x1="0" x2="1"><stop offset="0" stop-color="#fafafa"/><stop offset="0.6" stop-color="#f1f0ef"/><stop offset="1" stop-color="#e4e2df"/></linearGradient></defs><rect x="0.5" y="13.5" width="12" height="365" rx="6" fill="url(#vth130)" stroke="#b3aea8"/><path d="M4.5 193.0 H8.5 M4.5 196.0 H8.5 M4.5 199.0 H8.5" stroke="#bdb9b4"/></svg>
<svg style="position:absolute;left:340px;top:525px" width="645" height="13" viewBox="0 0 645 13"><rect x="0.5" y="0.5" width="644" height="12" rx="6" fill="#fbfbfb" stroke="#c4c0bb"/><path d="M9 3.5 L6 6.5 L9 9.5 Z" fill="#a8a8a8"/><path d="M636 3.5 L639 6.5 L636 9.5 Z" fill="#a8a8a8"/><defs><linearGradient id="hth340" x1="0" y1="0" x2="0" y2="1"><stop offset="0" stop-color="#fafafa"/><stop offset="0.6" stop-color="#f1f0ef"/><stop offset="1" stop-color="#e4e2df"/></linearGradient></defs><rect x="13.5" y="0.5" width="618" height="12" rx="6" fill="url(#hth340)" stroke="#b3aea8"/><path d="M319.5 4.5 V8.5 M322.5 4.5 V8.5 M325.5 4.5 V8.5" stroke="#bdb9b4"/></svg>
<svg style="position:absolute;left:309px;top:97px" width="707" height="443" viewBox="0 0 707 443"><path d="M0 0 H7 A6.5 6.5 0 0 0 0 7 Z" fill="#f8f8f8"/><path d="M707 0 H700 A6.5 6.5 0 0 1 707 7 Z" fill="#f8f8f8"/><path d="M0 443 H7 A6.5 6.5 0 0 1 0 436 Z" fill="#e9e9e9"/><path d="M707 443 H700 A6.5 6.5 0 0 0 707 436 Z" fill="#e9e9e9"/><rect x="0.5" y="0.5" width="706" height="442" rx="6" fill="none" stroke="#a9b5ca" stroke-width="1"/></svg>
<div style="left:309px;top:544px;width:352px;height:190px;background:#e2e2e2;border-radius:6px;opacity:0.8;"></div>
<div style="left:310px;top:545px;width:350px;height:188px;background:#fff;border-radius:5px;"></div>
<div style="left:310px;top:545px;width:350px;height:32px;background:#efefef;border-radius:5px 5px 0 0;"></div>
<div style="left:310px;top:545px;width:102px;height:32px;background:#fff;border-radius:5px 5px 0 0;"></div>
<svg style="position:absolute;left:316px;top:553px" width="14" height="15" viewBox="0 0 14 15"><rect x="1" y="1" width="12" height="10" rx="1.5" fill="#eef8ff" stroke="#2d5fae" stroke-width="1.8"/><path d="M3.5 5.4 H7.8 M3.5 7.5 H9.8" stroke="#3a4a90" stroke-width="1"/><rect x="4.5" y="11" width="5" height="2" fill="#2d5fae"/><rect x="1.5" y="13" width="11" height="1.3" rx="0.6" fill="#2d5fae"/></svg>
<div class="t" style="left:334.7px;top:552px;font-family:'Liberation Sans';font-size:14px;font-weight:normal;color:#000;letter-spacing:0.161px;">Console</div>
<svg style="position:absolute;left:395px;top:556px" width="11" height="10" viewBox="0 0 11 10"><path d="M0.5 0.5 H3.5 L5.5 3 L7.5 0.5 H10.5 V2.5 L7.3 5 L10.5 7.5 V9.5 H7.5 L5.5 7 L3.5 9.5 H0.5 V7.5 L3.7 5 L0.5 2.5 Z" fill="#fff" stroke="#111" stroke-width="1"/></svg>
<svg style="position:absolute;left:607px;top:555.5px" width="11" height="5" viewBox="0 0 11 5"><rect x="0.6" y="0.6" width="9.8" height="3.6" fill="#fff" stroke="#000" stroke-width="1.2"/></svg>
<svg style="position:absolute;left:634.5px;top:555.5px" width="11" height="8" viewBox="0 0 11 8"><path d="M0.6 7.5 V0.6 H10.4 V7.5" fill="none" stroke="#000" stroke-width="1.2"/><path d="M1 2.5 H10" stroke="#000" stroke-width="0.9"/></svg>
<div style="left:314px;top:578px;width:342px;height:30px;background:#eeeeee;"></div>
<div style="left:372px;top:580px;width:26px;height:26px;background:linear-gradient(#f2f1ef,#dfdedb);border:1px solid #aaa7a1;border-radius:4px;"></div>
<div style="left:468px;top:580px;width:26px;height:26px;background:linear-gradient(#f2f1ef,#dfdedb);border:1px solid #aaa7a1;border-radius:4px;"></div>
<svg style="position:absolute;left:322px;top:585px" width="14" height="16" viewBox="0 0 14 16"><defs><linearGradient id="yg1" x1="0" y1="0" x2="0" y2="1"><stop offset="0" stop-color="#fffbe6"/><stop offset="1" stop-color="#f7d15c"/></linearGradient></defs><path d="M4.6 1 H9.2 V7.8 H12.6 L6.9 14.2 L1.2 7.8 H4.6 Z" fill="url(#yg1)" stroke="#c48c14" stroke-width="1.1" stroke-linejoin="round"/></svg>
<svg style="position:absolute;left:350px;top:585px" width="14" height="11" viewBox="0 0 14 11"><defs><linearGradient id="yg2" x1="0" y1="0" x2="0" y2="1"><stop offset="0" stop-color="#fffbe6"/><stop offset="1" stop-color="#f7d15c"/></linearGradient></defs><path d="M7 0.8 L12.6 6.5 H9.3 V9.6 H4.7 V6.5 H1.4 Z" fill="url(#yg2)" stroke="#c48c14" stroke-width="1.1" stroke-linejoin="round"/></svg>
<svg style="position:absolute;left:377px;top:585px" width="16" height="12" viewBox="0 0 16 12"><defs><linearGradient id="yg3" x1="0" y1="0" x2="0" y2="1"><stop offset="0" stop-color="#fffbe6"/><stop offset="1" stop-color="#f7d15c"/></linearGradient></defs><path d="M1 5.5 L6.2 1 V3.7 H12.2 Q13.8 3.7 13.8 5.5 Q13.8 7.3 12.2 7.3 H6.2 V10 Z" fill="url(#yg3)" stroke="#c48c14" stroke-width="1.1" stroke-linejoin="round"/><path d="M11 9.5 H14 M12 10.8 H14.5" stroke="#b88a20" stroke-width="1"/></svg>
<div style="left:405px;top:584px;width:1px;height:16px;background:#cfcfcf;"></div>
<svg style="position:absolute;left:419px;top:586px" width="15" height="10" viewBox="0 0 15 10"><rect x="0.5" y="0.5" width="11" height="8.5" fill="#e4eef9"/><path d="M0.5 9 V0.5 H13.5" fill="none" stroke="#c4a050" stroke-width="1"/><rect x="9.5" y="0.5" width="4" height="8.5" fill="#eef3fa"/><path d="M9.5 9 V0.5 H13.5 V9" fill="none" stroke="#3a64a8" stroke-width="1"/><rect x="10.8" y="2" width="1.5" height="1.5" fill="#2a4a90"/><path d="M1 9.2 H9" stroke="#c4a050" stroke-dasharray="2 2" stroke-width="0.8"/></svg>
<svg style="position:absolute;left:446px;top:586px" width="15" height="10" viewBox="0 0 15 10"><rect x="0.5" y="0.5" width="11" height="8.5" fill="#e4eef9"/><path d="M0.5 9 V0.5 H13.5" fill="none" stroke="#c4a050" stroke-width="1"/><rect x="9.5" y="0.5" width="4" height="8.5" fill="#eef3fa"/><path d="M9.5 9 V0.5 H13.5 V9" fill="none" stroke="#3a64a8" stroke-width="1"/><rect x="10.8" y="2" width="1.5" height="1.5" fill="#2a4a90"/><path d="M0.8 9.5 Q3.5 5 6.2 9.5" fill="none" stroke="#c4901e" stroke-width="1.2"/></svg>
<svg style="position:absolute;left:477px;top:589px" width="12" height="6" viewBox="0 0 12 6"><path d="M0 0.5 H11 M0 2.5 H3.5 M0 4.5 H11" stroke="#7a94c8" stroke-width="1"/></svg>
<svg style="position:absolute;left:502px;top:586px" width="16" height="10" viewBox="0 0 16 10"><path d="M0.5 0.5 H7.5 L10.5 3.5 V9.5 H0.5 Z" fill="#fbfaf3" stroke="#c9a45a"/><path d="M7.5 0.5 V3.5 H10.5" fill="#f0dca0" stroke="#c9a45a" stroke-width="0.7"/><path d="M2 3.5 H7 M2 5.5 H9 M2 7.5 H9" stroke="#3a64a8" stroke-width="0.9"/><path d="M10 9.3 H15.5" stroke="#8a8a8a" stroke-dasharray="1 1" stroke-width="0.9"/></svg>
<div style="left:529px;top:584px;width:1px;height:16px;background:#cfcfcf;"></div>
<svg style="position:absolute;left:542px;top:586px" width="16" height="10" viewBox="0 0 16 10"><rect x="0.5" y="4" width="10" height="5" fill="#6a9ad6" stroke="#2a5aa0" stroke-width="0.8"/><path d="M7 6 L12 2" stroke="#1a7a2a" stroke-width="1.6"/><circle cx="12.5" cy="2.5" r="2.2" fill="#3aaa4a" stroke="#1a7a2a" stroke-width="0.8"/></svg>
<svg style="position:absolute;left:571px;top:585px" width="14" height="10" viewBox="0 0 14 10"><rect x="1" y="1" width="12" height="9" fill="#eef3fb"/><path d="M1 10 V1 H13 V10" fill="none" stroke="#2d5ca8" stroke-width="2"/><path d="M3.5 4.8 H8 M3.5 7 H11" stroke="#2d5ca8" stroke-width="1.1"/></svg>
<svg style="position:absolute;left:597px;top:591px" width="8" height="5" viewBox="0 0 8 5"><path d="M0 0H7.5L3.75 4.6Z" fill="#6d6d6d"/></svg>
<svg style="position:absolute;left:617px;top:585px" width="16" height="11" viewBox="0 0 16 11"><rect x="0.5" y="2.5" width="12" height="8" fill="#fbfbf6" stroke="#c9a14a"/><rect x="0.5" y="2.5" width="12" height="2.5" fill="#4d8fd6"/><path d="M11.5 0.5 L13 3 L15.5 3.5 L13.5 5.2 L14 8 L11.5 6.5 L9 8 L9.5 5.2 L7.5 3.5 L10 3 Z" fill="#fff7c0" stroke="#d19e2a" stroke-width="0.9"/></svg>
<svg style="position:absolute;left:645px;top:591px" width="8" height="5" viewBox="0 0 8 5"><path d="M0 0H7.5L3.75 4.6Z" fill="#6d6d6d"/></svg>
<div class="t" style="left:311.7px;top:605px;font-family:'Liberation Sans';font-size:14.5px;font-weight:normal;color:#3c3c3c;letter-spacing:0.119px;">CDT Build Console [helloworld]</div>
<div style="left:311px;top:624px;width:348px;height:1px;background:#dcdcdc;"></div>
<div style="left:643px;top:626px;width:16px;height:106px;background:#f0efee;"></div>
<svg style="position:absolute;left:646px;top:626px" width="13" height="106" viewBox="0 0 13 106"><rect x="0.5" y="0.5" width="12" height="105" rx="6" fill="#fbfbfb" stroke="#c4c0bb"/><path d="M3.5 9 L6.5 6 L9.5 9 Z" fill="#a8a8a8"/><path d="M3.5 97 L6.5 100 L9.5 97 Z" fill="#a8a8a8"/><defs><linearGradient id="vth626" x1="0" x2="1"><stop offset="0" stop-color="#fafafa"/><stop offset="0.6" stop-color="#f1f0ef"/><stop offset="1" stop-color="#e4e2df"/></linearGradient></defs><rect x="0.5" y="14.0" width="12" height="78" rx="6" fill="url(#vth626)" stroke="#b3aea8"/><path d="M4.5 50.0 H8.5 M4.5 53.0 H8.5 M4.5 56.0 H8.5" stroke="#bdb9b4"/></svg>
<div style="left:665px;top:544px;width:352px;height:190px;background:#e2e2e2;border-radius:6px;opacity:0.8;"></div>
<div style="left:666px;top:545px;width:350px;height:188px;background:#fff;border-radius:5px;"></div>
<div style="left:666px;top:545px;width:350px;height:32px;background:#efefef;border-radius:5px 5px 0 0;"></div>
<div style="left:666px;top:545px;width:103px;height:32px;background:#fff;border-radius:5px 5px 0 0;"></div>
<svg style="position:absolute;left:669px;top:552px" width="16" height="17" viewBox="0 0 16 17"><path d="M1.5 1.5 H12 Q14.5 3 13.5 6.5 Q12.5 9.5 13 12.5 L14.5 15.5 H1.5 Z" fill="#eef6fc" stroke="#5a6a90" stroke-width="0.9"/><path d="M1.5 15.5 V1.5 H12" fill="none" stroke="#8a8050" stroke-width="1"/><path d="M10.5 2 V15 M2 8.5 H13" stroke="#a8bce0" stroke-width="0.9"/><circle cx="6.5" cy="5.5" r="2.6" fill="#e82a2a"/><path d="M3.8 15 Q3.8 10 6.5 10 Q9.2 10 9.2 15 Z" fill="#f6b020"/></svg>
<div class="t" style="left:690px;top:552px;font-family:'Liberation Sans';font-size:13.5px;font-weight:normal;color:#000;letter-spacing:-0.254px;">Problems</div>
<svg style="position:absolute;left:751.5px;top:556px" width="11" height="10" viewBox="0 0 11 10"><path d="M0.5 0.5 H3.5 L5.5 3 L7.5 0.5 H10.5 V2.5 L7.3 5 L10.5 7.5 V9.5 H7.5 L5.5 7 L3.5 9.5 H0.5 V7.5 L3.7 5 L0.5 2.5 Z" fill="#fff" stroke="#111" stroke-width="1"/></svg>
<svg style="position:absolute;left:935.5px;top:555.5px" width="11" height="6" viewBox="0 0 11 6"><path d="M1 0.8 H10 L5.5 5.2 Z" fill="none" stroke="#000" stroke-width="1.3" stroke-linejoin="miter"/></svg>
<svg style="position:absolute;left:962.5px;top:555.5px" width="11" height="5" viewBox="0 0 11 5"><rect x="0.6" y="0.6" width="9.8" height="3.6" fill="#fff" stroke="#000" stroke-width="1.2"/></svg>
<svg style="position:absolute;left:990.5px;top:555.5px" width="11" height="8" viewBox="0 0 11 8"><path d="M0.6 7.5 V0.6 H10.4 V7.5" fill="none" stroke="#000" stroke-width="1.2"/><path d="M1 2.5 H10" stroke="#000" stroke-width="0.9"/></svg>
<div class="t" style="left:667.4px;top:576px;font-family:'Liberation Sans';font-size:14.5px;font-weight:normal;color:#3c3c3c;letter-spacing:0.093px;">0 items</div>
<div style="left:666px;top:594px;width:349px;height:1px;background:#dcdcdc;"></div>
<div style="left:666px;top:595px;width:349px;height:25px;background:linear-gradient(#fefefe,#ecebea);"></div>
<div style="left:666px;top:619px;width:349px;height:1px;background:#a9a7a4;"></div>
<div style="left:666px;top:620px;width:349px;height:1px;background:#e6e6e6;"></div>
<div class="t" style="left:672.4px;top:599px;font-family:'Liberation Sans';font-size:14.5px;font-weight:normal;color:#3c3c3c;letter-spacing:0.479px;">Description</div>
<div style="left:666px;top:716px;width:349px;height:16px;background:#f0efee;"></div>
<svg style="position:absolute;left:667px;top:719px" width="348" height="13" viewBox="0 0 348 13"><rect x="0.5" y="0.5" width="347" height="12" rx="6" fill="#fbfbfb" stroke="#c4c0bb"/><rect x="13.5" y="0.5" width="320.5" height="12" rx="6" fill="#dcdad6" stroke="#c4c0bb"/><path d="M9 3.5 L6 6.5 L9 9.5 Z" fill="#a8a8a8"/><path d="M339 3.5 L342 6.5 L339 9.5 Z" fill="#505050"/><defs><linearGradient id="pth" x1="0" y1="0" x2="0" y2="1"><stop offset="0" stop-color="#fafafa"/><stop offset="0.6" stop-color="#f1f0ef"/><stop offset="1" stop-color="#e4e2df"/></linearGradient></defs><rect x="13.5" y="0.5" width="138" height="12" rx="6" fill="url(#pth)" stroke="#b3aea8"/><path d="M79.5 4.5 V8.5 M82.5 4.5 V8.5 M85.5 4.5 V8.5" stroke="#bdb9b4"/></svg>
<div style="left:6px;top:741px;width:2px;height:3px;background:#a39d8f;border-radius:1px;"></div>
<div style="left:6px;top:747px;width:2px;height:3px;background:#a39d8f;border-radius:1px;"></div>
<div style="left:6px;top:753px;width:2px;height:3px;background:#a39d8f;border-radius:1px;"></div>
<div style="left:6px;top:759px;width:2px;height:3px;background:#a39d8f;border-radius:1px;"></div>
<div style="left:108px;top:741px;width:2px;height:3px;background:#a39d8f;border-radius:1px;"></div>
<div style="left:108px;top:747px;width:2px;height:3px;background:#a39d8f;border-radius:1px;"></div>
<div style="left:108px;top:753px;width:2px;height:3px;background:#a39d8f;border-radius:1px;"></div>
<div style="left:108px;top:759px;width:2px;height:3px;background:#a39d8f;border-radius:1px;"></div>
<div style="left:128px;top:741px;width:2px;height:3px;background:#a39d8f;border-radius:1px;"></div>
<div style="left:128px;top:747px;width:2px;height:3px;background:#a39d8f;border-radius:1px;"></div>
<div style="left:128px;top:753px;width:2px;height:3px;background:#a39d8f;border-radius:1px;"></div>
<div style="left:128px;top:759px;width:2px;height:3px;background:#a39d8f;border-radius:1px;"></div>
<div style="left:697px;top:741px;width:2px;height:3px;background:#a39d8f;border-radius:1px;"></div>
<div style="left:697px;top:747px;width:2px;height:3px;background:#a39d8f;border-radius:1px;"></div>
<div style="left:697px;top:753px;width:2px;height:3px;background:#a39d8f;border-radius:1px;"></div>
<div style="left:697px;top:759px;width:2px;height:3px;background:#a39d8f;border-radius:1px;"></div>
<div class="t" style="left:14.5px;top:742px;font-family:'Liberation Sans';font-size:14.5px;font-weight:normal;color:#4a4a4a;letter-spacing:-0.115px;">Full License</div>
<div style="left:336px;top:736px;width:35px;height:27px;background:#e6e6e6;border-top:1px solid #f6f6f6;border-left:1px solid #f6f6f6;border-right:1px solid #a9a7a3;border-bottom:1px solid #a9a7a3;box-shadow:1px 1px 0 #d4d2ce;"></div>
<svg style="position:absolute;left:339px;top:741px" width="18" height="17" viewBox="0 0 18 17"><rect x="9" y="5" width="7" height="7.5" fill="#e6f2fc" stroke="#6a8ec8" stroke-width="1.3"/><rect x="10.5" y="13" width="3.5" height="1.8" fill="#6a8ec8"/><rect x="8.5" y="14.5" width="7" height="1.2" fill="#6a8ec8"/><circle cx="5.5" cy="11.4" r="3.9" fill="#eef0fa" stroke="#a8b4d8" stroke-width="0.9"/><circle cx="5.5" cy="11.4" r="2.6" fill="none" stroke="#f0eaa0" stroke-width="1.2"/><circle cx="5.5" cy="11.4" r="1.1" fill="#fff" stroke="#6a7ac0" stroke-width="0.9"/><path d="M1.5 9 Q1.8 4 6 3.5 L6.5 1 L10.2 4.5 L6.8 7.5 L6.6 5.6 Q3.5 6 2.5 9.5 Z" fill="#f8d050" stroke="#c89010" stroke-width="0.8" stroke-linejoin="round"/></svg>
<div style="left:375px;top:738px;width:1px;height:24px;background:#d4d4d4;"></div>
<div style="left:494px;top:738px;width:1px;height:24px;background:#d4d4d4;"></div>
<div style="left:606px;top:738px;width:1px;height:24px;background:#d4d4d4;"></div>
<div class="t" style="left:382px;top:740px;font-family:'Liberation Sans';font-size:14.5px;font-weight:normal;color:#4a4a4a;letter-spacing:0.685px;">Writable</div>
<div class="t" style="left:501.3px;top:740px;font-family:'Liberation Sans';font-size:14.5px;font-weight:normal;color:#4a4a4a;letter-spacing:0.253px;">Smart Insert</div>
<div class="t" style="left:613.8px;top:740px;font-family:'Liberation Sans';font-size:14.5px;font-weight:normal;color:#4a4a4a;letter-spacing:-0.449px;">12 : 18</div>
<div style="left:747px;top:60px;width:112px;height:24px;background:#fff;border:1px solid #b9b7b3;border-radius:3px;"></div>
<div class="t" style="left:751.6px;top:62px;font-family:'Liberation Sans';font-size:14.5px;font-weight:normal;color:#a9a9a9;letter-spacing:-0.086px;">Quick Access</div>
<svg style="position:absolute;left:885px;top:64px" width="17" height="12" viewBox="0 0 17 12"><rect x="1" y="2.5" width="11" height="7" fill="#eef7fd"/><rect x="1" y="2.5" width="10" height="2.5" fill="#3f86d0"/><rect x="1" y="4.5" width="1.2" height="5" fill="#c4901e"/><path d="M1 9.5 H11" stroke="#3a64a8" stroke-width="0.8"/><path d="M12 0.8999999999999999 L13.1 3.4 L15.6 4.5 L13.1 5.6 L12 8.1 L10.9 5.6 L8.4 4.5 L10.9 3.4 Z" fill="#fff6d0" stroke="#b88a16" stroke-width="1.1" stroke-linejoin="round"/></svg>
<div style="left:915px;top:63px;width:1px;height:18px;background:#d0d0d0;"></div>
<div style="left:923px;top:60px;width:85px;height:26px;background:linear-gradient(#f4f3f1,#e3e1dd);border:1px solid #aeaaa4;border-radius:4px;"></div>
<svg style="position:absolute;left:931px;top:66px" width="14" height="10" viewBox="0 0 14 10"><rect x="0.5" y="0.5" width="12" height="8" fill="#eef3fa" stroke="#3a64a8" stroke-width="0.9"/><rect x="0.5" y="0.5" width="12" height="2" fill="#5a8ed0"/><path d="M3 5 H10 M3 7 H8" stroke="#3a64a8" stroke-width="0.8"/></svg>
<div class="t" style="left:948.4px;top:64px;font-family:'Liberation Sans';font-size:14.5px;font-weight:normal;color:#3c3c3c;letter-spacing:-0.630px;">CCS Edit</div>
</body></html>
